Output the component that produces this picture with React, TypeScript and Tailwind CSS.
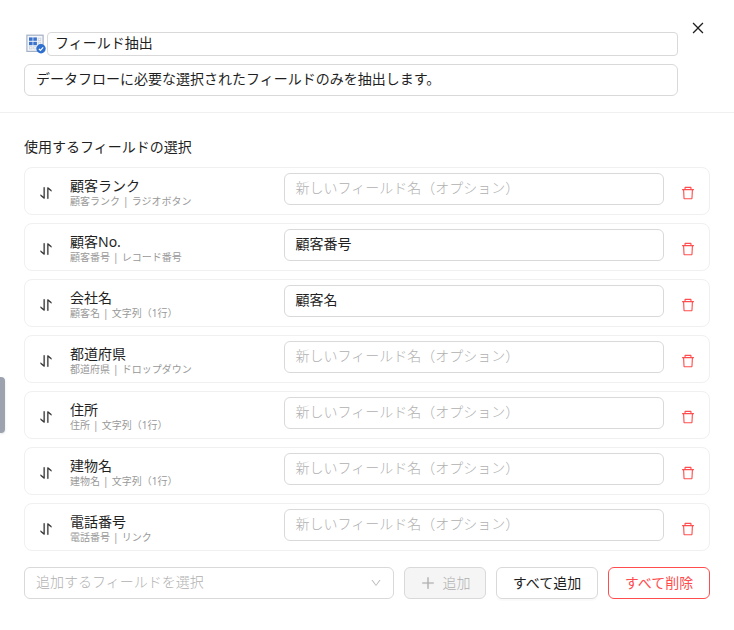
import React from "react";
import {
  AiOutlineClose,
  AiOutlineDelete,
  AiOutlineDown,
  AiOutlinePlus,
  AiOutlineSwap,
} from "react-icons/ai";

type Field = { name: string; source: string; type: string; alias?: string };

const fields: Field[] = [
  { name: "顧客ランク", source: "顧客ランク", type: "ラジオボタン" },
  { name: "顧客No.", source: "顧客番号", type: "レコード番号", alias: "顧客番号" },
  { name: "会社名", source: "顧客名", type: "文字列（1行）", alias: "顧客名" },
  { name: "都道府県", source: "都道府県", type: "ドロップダウン" },
  { name: "住所", source: "住所", type: "文字列（1行）" },
  { name: "建物名", source: "建物名", type: "文字列（1行）" },
  { name: "電話番号", source: "電話番号", type: "リンク" },
];

function ExtractIcon() {
  return (
    <svg width="20" height="20" viewBox="0 0 20 20" className="shrink-0">
      <rect x="0.9" y="1.2" width="16.2" height="16.2" fill="#f4f6f9" stroke="#a3b1c6" strokeWidth="1.2" />
      <g fill="#3a72cd">
        <rect x="3" y="3.4" width="3.6" height="3.4" />
        <rect x="7.3" y="3.4" width="3.6" height="3.4" />
        <rect x="3" y="7.8" width="3.6" height="3.4" />
        <rect x="7.3" y="7.8" width="3.6" height="3.4" />
      </g>
      <g fill="none" stroke="#c9d1dd" strokeWidth="0.8">
        <rect x="12.2" y="4.2" width="2.6" height="2.4" />
        <rect x="12.2" y="8.2" width="2.6" height="2.4" />
        <rect x="3.4" y="12.7" width="2.6" height="2.2" />
        <rect x="7.7" y="12.7" width="2.6" height="2.2" />
      </g>
      <circle cx="15" cy="14.8" r="4.7" fill="#2f6fd0" />
      <path d="M12.9 14.9l1.5 1.5 2.8-3" fill="none" stroke="#fff" strokeWidth="1.2" />
    </svg>
  );
}

function FieldRow({ field }: { field: Field }) {
  return (
    <div className="flex h-12 items-start rounded-lg border border-[#f0f0f0] pl-[13px]">
      <AiOutlineSwap className="mt-[17px] size-4 shrink-0 rotate-90 text-[#333]" strokeWidth={8} />
      <div className="ml-4 w-[214px] shrink-0 whitespace-nowrap pt-[7px]">
        <div className="text-sm leading-[22px]">{field.name}</div>
        <div className="-mt-0.5 text-[10px] leading-3 text-[#999] [word-spacing:0.5px]">
          {field.source} | {field.type}
        </div>
      </div>
      <div
        className={`mt-[5px] h-8 w-[380px] shrink-0 rounded-md border border-[#d9d9d9] pl-[10.5px] leading-7 ${
          field.alias ? "" : "font-light text-[#b0b0b0]"
        }`}
      >
        {field.alias ?? "新しいフィールド名（オプション）"}
      </div>
      <AiOutlineDelete className="ml-4 mt-[17px] size-4 shrink-0 text-[#ff4d4f]" />
    </div>
  );
}

export default function App() {
  return (
    <div className="relative h-[630px] w-[734px] overflow-hidden bg-white font-['Noto_Sans','Noto_Sans_CJK_JP',sans-serif] text-sm text-[#1f1f1f]">
      <header className="flex h-[113px] items-start border-b border-[#f0f0f0] pl-6">
        <div className="w-[654px] pt-8">
          <div className="flex">
            <div className="w-[23px] pl-0.5 pt-0.5">
              <ExtractIcon />
            </div>
            <div className="h-6 flex-1 rounded border border-[#d9d9d9] pl-[7px] leading-5">
              フィールド抽出
            </div>
          </div>
          <div className="mt-2 h-8 rounded-md border border-[#d9d9d9] pl-[11px] leading-7">
            データフローに必要な選択されたフィールドのみを抽出します。
          </div>
        </div>
        <AiOutlineClose className="ml-3 mt-5 size-4" />
      </header>

      <main className="px-6 pt-[23px]">
        <h2 className="leading-[22px]">使用するフィールドの選択</h2>
        <div className="mt-[9px] flex w-[686px] flex-col gap-2">
          {fields.map((field) => (
            <FieldRow key={field.name} field={field} />
          ))}
        </div>
        <div className="mt-4 flex gap-2.5">
          <div className="flex h-8 w-[370px] justify-between rounded-md border border-[#d9d9d9] pl-[11px] pr-[11px] font-light leading-7 text-[#b0b0b0]">
            追加するフィールドを選択
            <AiOutlineDown className="mt-[9px] size-3 text-[#bfbfbf]" />
          </div>
          <button className="flex h-8 w-[82px] items-center justify-center gap-2 rounded-md border border-[#d9d9d9] bg-[#f5f5f5] pb-px font-light text-[#b0b0b0]">
            <AiOutlinePlus className="size-4 -mr-px" strokeWidth={16} />
            追加
          </button>
          <button className="h-8 w-[102px] rounded-md border border-[#d9d9d9] pb-px shadow-[0_2px_0_rgba(0,0,0,0.02)]">
            すべて追加
          </button>
          <button className="h-8 w-[102px] rounded-md border border-[#ff4d4f] pb-px text-[#ff4d4f]">
            すべて削除
          </button>
        </div>
      </main>

      <div className="absolute left-0 top-[377px] h-14 w-[5px] rounded-r-sm bg-[#9ca3af] shadow-sm" />
    </div>
  );
}
